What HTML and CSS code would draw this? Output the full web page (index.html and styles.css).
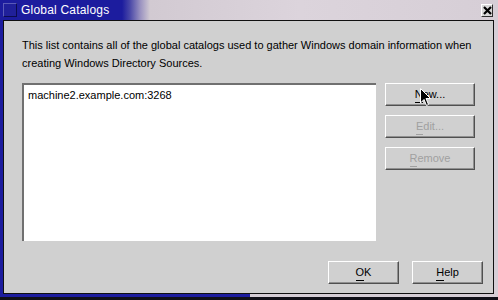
FILE: index.html
```html
<!DOCTYPE html>
<html>
<head>
<meta charset="utf-8">
<link rel="stylesheet" href="styles.css">
</head>
<body>
<div class="window">
  <div class="titlebar">
    <span class="ticon"></span>
    <span class="title">Global Catalogs</span>
    <span class="spacer"></span>
    <span class="close"><svg width="9" height="9" viewBox="0 0 9 9"><path d="M1 1 L8 8 M8 1 L1 8" stroke="#000" stroke-width="2.2"/></svg></span>
  </div>
  <div class="frame">
    <div class="panel">
      <p class="desc">This list contains all of the global catalogs used to gather Windows domain information when creating Windows Directory Sources.</p>
      <div class="main">
        <div class="list">
          <div class="item">machine2.example.com:3268</div>
        </div>
        <div class="side">
          <button class="btn"><u>N</u>ew...</button>
          <button class="btn disabled"><u>E</u>dit...</button>
          <button class="btn disabled"><u>R</u>emove</button>
        </div>
      </div>
      <div class="footer">
        <button class="btn small"><u>O</u>K</button>
        <button class="btn small"><u>H</u>elp</button>
      </div>
    </div>
  </div>
  <svg class="cursor" width="12" height="19" viewBox="0 0 12 19"><path d="M0.5 0.5 L0.5 15 L4 11.5 L6.5 17.5 L8.5 16.5 L6 10.5 L10.5 10.5 Z" fill="#000" stroke="#fff" stroke-width="1"/></svg>
</div>
</body>
</html>
```

FILE: styles.css
```css
* { box-sizing: border-box; }
html, body { margin: 0; padding: 0; }
body {
  width: 498px;
  height: 300px;
  background: #101018;
  font-family: "Liberation Sans", Arial, sans-serif;
  overflow: hidden;
}
.window {
  position: relative;
  width: 498px;
  height: 297px;
  display: flex;
  flex-direction: column;
}
.titlebar {
  height: 20px;
  display: flex;
  align-items: center;
  background: linear-gradient(to right, #1c1c9e 0, #1c1c9e 122px, #4a48a8 130px, #9890c0 140px, #d2cad2 150px, #dcd4dc 300px, #d6ced6 100%);
  padding: 0 5px 0 3px;
}
.ticon {
  width: 14px;
  height: 14px;
  background: #20209a;
  border: 1px solid;
  border-color: #5a5ab8 #0c0c50 #0c0c50 #5a5ab8;
}
.title {
  color: #fff;
  font-size: 12px;
  margin-left: 4px;
  letter-spacing: 0.2px;
}
.spacer { flex: 1; }
.close {
  width: 12px;
  height: 13px;
  background: #d8d8d8;
  border: 1px solid;
  border-color: #fff #303030 #303030 #fff;
  display: flex;
  align-items: center;
  justify-content: center;
  margin-top: 1px;
}
.frame {
  flex: 1;
  display: flex;
  background: linear-gradient(to right, #1c1c9e 0, #1c1c9e 250px, #d6ced6 250px);
  padding: 0 4px 3px 3px;
}
.panel {
  flex: 1;
  background: #d0d0d0;
  border: 1px solid #101010;
  padding: 15px 10px 0 18px;
  display: flex;
  flex-direction: column;
}
.desc {
  margin: 0;
  font-size: 11px;
  line-height: 18px;
  color: #000;
}
.main {
  display: flex;
  margin-top: 11px;
  gap: 9px;
}
.list {
  width: 354px;
  height: 158px;
  background: #fff;
  border-top: 2px solid #707070;
  border-left: 2px solid #707070;
  padding: 4px 2px;
}
.item {
  font-size: 11px;
  color: #000;
  padding-left: 2px;
}
.side {
  display: flex;
  flex-direction: column;
  gap: 9px;
}
.btn {
  width: 90px;
  height: 23px;
  background: #d0d0d0;
  border: 1px solid;
  border-color: #ffffff #505050 #505050 #ffffff;
  box-shadow: inset -1px -1px 0 #909090;
  font-family: "Liberation Sans", Arial, sans-serif;
  font-size: 11px;
  color: #000;
  padding: 0;
}
.btn u {
  text-decoration: none;
  border-bottom: 1px solid currentColor;
  display: inline-block;
  line-height: 15px;
}
.btn.disabled { color: #a0a0a0; }
.footer {
  display: flex;
  justify-content: flex-end;
  gap: 13px;
  margin-top: 20px;
}
.btn.small { width: 71px; }
.cursor {
  position: absolute;
  left: 420px;
  top: 88px;
}
```
